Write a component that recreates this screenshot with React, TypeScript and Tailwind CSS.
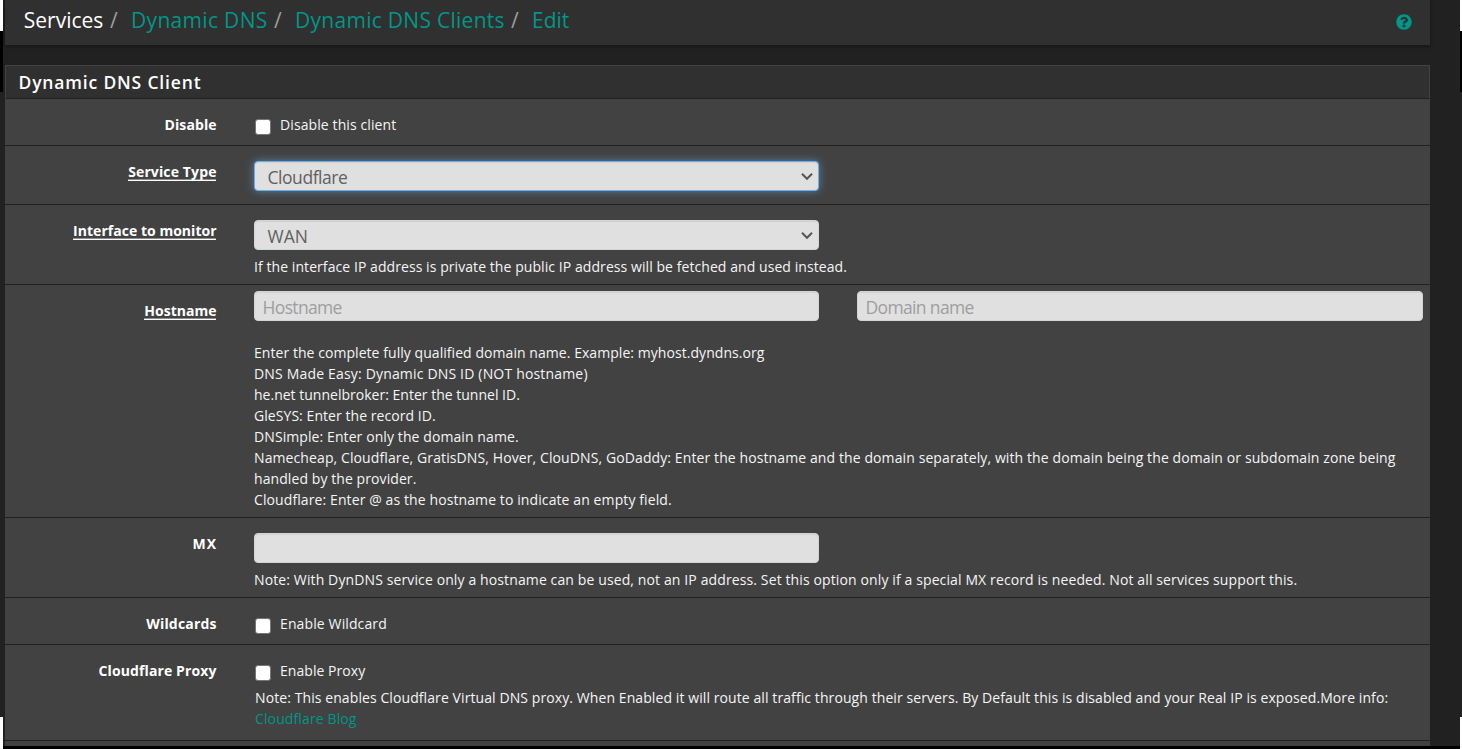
import type { ReactNode } from 'react';
import { FaQuestionCircle } from 'react-icons/fa';

function EdgeStrip({ width }: { width: string }) {
  return (
    <div className={`flex shrink-0 flex-col ${width}`}>
      <div className="h-[31px] bg-white" />
      <div className="h-[61px] bg-black" />
      <div className="h-[625px] bg-[#212121]" />
      <div className="flex-1 bg-white" />
    </div>
  );
}

function Row({ label, required, height, pad = 'pt-[15px]', children }: {
  label: ReactNode;
  required?: boolean;
  height: string;
  pad?: string;
  children: ReactNode;
}) {
  return (
    <div className={`flex shrink-0 whitespace-nowrap border-b border-[#212121] ${height}`}>
      <div className="w-[211px] shrink-0 pt-[15px] text-right font-bold text-white">
        {required ? (
          <span className="inline-block h-[18px] align-top shadow-[0_1px_0_#8e8e8e,0_2px_0_#ffffff]">{label}</span>
        ) : (
          label
        )}
      </div>
      <div className={`ml-[38px] w-[1169px] shrink-0 ${pad}`}>{children}</div>
    </div>
  );
}

function Check({ children }: { children: ReactNode }) {
  return (
    <label className="flex h-[21px] items-start pl-px">
      <input type="checkbox" className="mt-[5px] h-4 w-4 appearance-none rounded-[3px] border border-[#767676] bg-white" />
      <span className="ml-[9px]">{children}</span>
    </label>
  );
}

function Select({ value, focused }: { value: ReactNode; focused?: boolean }) {
  return (
    <div
      className={`flex h-[30px] w-[565px] items-start justify-between rounded-[4px] border bg-[#e0e0e0] pl-[12.5px] text-[17.5px] leading-[30px] text-[#616161] ${
        focused
          ? 'border-[#66afe9] shadow-[inset_0_1px_1px_rgba(0,0,0,0.075),0_0_8px_rgba(102,175,233,0.6)]'
          : 'border-[#d4d4d4] shadow-[inset_0_1px_1px_rgba(0,0,0,0.075)]'
      }`}
    >
      {value}
      <svg width="12" height="9" viewBox="0 0 12 9" className="mr-[5px] mt-[10px]" fill="none" stroke="#555" strokeWidth="2">
        <path d="M1 1.8 6 6.8l5-5" />
      </svg>
    </div>
  );
}

const field =
  'h-[30px] rounded-[4px] border border-[#d4d4d4] bg-[#e0e0e0] px-[7.5px] pt-[2px] text-[17.5px] leading-[26px] tracking-[-0.65px] text-[#616161] shadow-[inset_0_1px_1px_rgba(0,0,0,0.075)] outline-none placeholder:text-[#9e9e9e]';

function Slash() {
  return <span className="w-[21px] shrink-0 text-[#9e9e9e]">/</span>;
}

export default function App() {
  return (
    <div className="flex h-[749px] w-[1462px] overflow-hidden bg-[#212121] font-['Open_Sans','Noto_Sans',sans-serif] text-[14px] leading-[21px] text-[#f5f5f5]">
      <EdgeStrip width="w-[3px]" />
      <div className="flex min-w-0 flex-1 flex-col">
        <div className="flex h-[746px] flex-col overflow-hidden pl-[2px] pr-[30px]">
          <header className="flex h-[45px] shrink-0 justify-between bg-[#303030] pl-[18px] pr-[18px] shadow-[0_1px_4px_rgba(0,0,0,0.45)]">
            <nav className="flex text-[21px] leading-[41px] text-[#009688]">
              <span className="w-[87px] shrink-0 pl-[0.7px] tracking-[0.02px] text-white">Services</span>
              <Slash />
              <span className="w-[143px] shrink-0 tracking-[0.32px]">Dynamic DNS</span>
              <Slash />
              <span className="w-[216px] shrink-0 tracking-[0.28px]">Dynamic DNS Clients</span>
              <Slash />
              <span>Edit</span>
            </nav>
            <FaQuestionCircle className="mt-[13.5px] h-4 w-4 text-[#009688]" />
          </header>

          <section className="mt-5 flex shrink-0 flex-col bg-[#424242]">
            <div className="h-[34px] border border-[#424242] border-b-[#212121] bg-[#303030] pl-[12.5px] text-[17.5px] font-semibold leading-[33px] tracking-[0.83px] text-white">
              Dynamic DNS Client
            </div>

            <Row height="h-[47px]" label={<span className="-mr-[0.6px] tracking-[0.08px]">Disable</span>}>
              <Check><span className="tracking-[0.1px]">Disable this client</span></Check>
            </Row>

            <Row height="h-[59px]" required label={<span className="-mr-[0.6px] tracking-[0.13px]">Service Type</span>}>
              <Select focused value={<span className="tracking-[-0.45px]">Cloudflare</span>} />
            </Row>

            <Row height="h-[80px]" required label={<span className="-mr-[0.6px] tracking-[0.03px]">Interface to monitor</span>}>
              <Select value={<span>WAN</span>} />
              <p className="mt-[6px] tracking-[0.07px]">If the interface IP address is private the public IP address will be fetched and used instead.</p>
            </Row>

            <Row height="h-[233px]" pad="pt-[6px]" required label={<span className="-mr-[0.6px] tracking-[0.03px]">Hostname</span>}>
              <div className="flex gap-[38px]">
                <input placeholder="Hostname" className={`w-[565px] ${field}`} />
                <input placeholder="Domain name" className={`w-[566px] ${field}`} />
              </div>
              <div className="mt-[21px]">
                <p className="tracking-[0.055px]">Enter the complete fully qualified domain name. Example: myhost.dyndns.org</p>
                <p className="tracking-[0.175px]">DNS Made Easy: Dynamic DNS ID (NOT hostname)</p>
                <p className="tracking-[0.01px]">he.net tunnelbroker: Enter the tunnel ID.</p>
                <p className="tracking-[0.06px]">GleSYS: Enter the record ID.</p>
                <p className="tracking-[0.09px]">DNSimple: Enter only the domain name.</p>
                <p className="tracking-[0.103px]">Namecheap, Cloudflare, GratisDNS, Hover, ClouDNS, GoDaddy: Enter the hostname and the domain separately, with the domain being the domain or subdomain zone being</p>
                <p className="tracking-[0.08px]">handled by the provider.</p>
                <p className="tracking-[0.1px]">Cloudflare: Enter @ as the hostname to indicate an empty field.</p>
              </div>
            </Row>

            <Row height="h-[80px]" label={<span className="-mr-[0.9px] tracking-[0.9px]">MX</span>}>
              <input className={`block w-[565px] ${field}`} />
              <p className="mt-[6px] tracking-[0.118px]">Note: With DynDNS service only a hostname can be used, not an IP address. Set this option only if a special MX record is needed. Not all services support this.</p>
            </Row>

            <Row height="h-[47px]" label={<span className="-mr-[0.6px] tracking-[0.17px]">Wildcards</span>}>
              <Check><span className="tracking-[0.12px]">Enable Wildcard</span></Check>
            </Row>

            <Row height="h-[96px]" label={<span className="-mr-[0.6px] tracking-[0.12px]">Cloudflare Proxy</span>}>
              <Check><span className="tracking-[0.05px]">Enable Proxy</span></Check>
              <p className="mt-[6px] pl-px tracking-[0.088px]">Note: This enables Cloudflare Virtual DNS proxy. When Enabled it will route all traffic through their servers. By Default this is disabled and your Real IP is exposed.More info:</p>
              <p className="pl-px tracking-[0.12px] text-[#009688]">Cloudflare Blog</p>
            </Row>
            <div className="h-[5px]" />
          </section>
        </div>
        <div className="h-[3px] bg-black" />
      </div>
      <EdgeStrip width="w-[2px]" />
    </div>
  );
}
